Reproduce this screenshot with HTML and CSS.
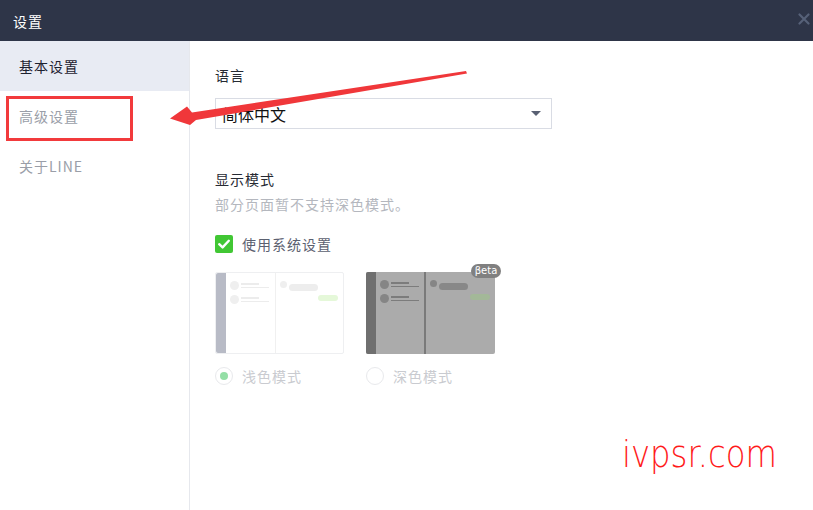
FILE: index.html
```html
<!DOCTYPE html>
<html lang="zh-CN">
<head>
<meta charset="utf-8">
<title>设置</title>
<link rel="stylesheet" href="styles.css">
</head>
<body>
<div class="window">
  <header class="titlebar">
    <span class="title">设置</span>
    <svg class="close" width="12" height="12" viewBox="0 0 12 12"><path d="M1.5 1.5L10.5 10.5M10.5 1.5L1.5 10.5" stroke="#566178" stroke-width="2.2" stroke-linecap="round"/></svg>
  </header>
  <div class="main">
    <nav class="sidebar">
      <div class="nav-item active">基本设置</div>
      <div class="nav-item">高级设置</div>
      <div class="nav-item">关于LINE</div>
    </nav>
    <section class="content">
      <div class="label">语言</div>
      <div class="select">
        <span class="select-text">简体中文</span>
        <span class="caret"></span>
      </div>
      <div class="label mode-title">显示模式</div>
      <div class="hint">部分页面暂不支持深色模式。</div>
      <div class="check-row">
        <span class="checkbox">
          <svg width="18" height="18" viewBox="0 0 18 18"><path d="M4.2 9.2L7.6 12.4L13.8 5.8" fill="none" stroke="#fff" stroke-width="2.4" stroke-linecap="round" stroke-linejoin="round"/></svg>
        </span>
        <span class="check-label">使用系统设置</span>
      </div>
      <div class="modes">
        <div class="mode">
          <div class="preview light">
            <div class="pv-bar"></div>
            <div class="pv-list">
              <div class="pv-row"><span class="pv-dot"></span><span class="pv-lines"><i class="s"></i><i></i></span></div>
              <div class="pv-row"><span class="pv-dot"></span><span class="pv-lines"><i class="s"></i><i></i></span></div>
            </div>
            <div class="pv-chat">
              <div class="pv-msg"><span class="pv-dot small"></span><span class="pv-bubble"></span></div>
              <div class="pv-mine"><span class="pv-green"></span></div>
            </div>
          </div>
          <div class="radio-row">
            <span class="radio on"></span>
            <span class="radio-label">浅色模式</span>
          </div>
        </div>
        <div class="mode">
          <div class="preview dark">
            <div class="pv-bar"></div>
            <div class="pv-list">
              <div class="pv-row"><span class="pv-dot"></span><span class="pv-lines"><i class="s"></i><i></i></span></div>
              <div class="pv-row"><span class="pv-dot"></span><span class="pv-lines"><i class="s"></i><i></i></span></div>
            </div>
            <div class="pv-chat">
              <div class="pv-msg"><span class="pv-dot small"></span><span class="pv-bubble"></span></div>
              <div class="pv-mine"><span class="pv-green"></span></div>
            </div>
            <span class="beta">βeta</span>
          </div>
          <div class="radio-row">
            <span class="radio"></span>
            <span class="radio-label">深色模式</span>
          </div>
        </div>
      </div>
    </section>
  </div>
</div>
<div class="highlight-box"></div>
<svg class="arrow" width="813" height="510" viewBox="0 0 813 510">
  <polygon points="466,71 467,73.5 196,120 190,125 170,118.5 187,106.5 192,112.5" fill="#f0373a"/>
</svg>
<div class="watermark">ivpsr.com</div>
</body>
</html>
```

FILE: styles.css
```css
* { box-sizing: border-box; }
html, body { margin: 0; padding: 0; }
body {
  width: 813px;
  height: 510px;
  overflow: hidden;
  background: #fff;
  font-family: "Microsoft YaHei", "Noto Sans CJK SC", "Noto Sans", sans-serif;
  letter-spacing: 1px;
  position: relative;
}
.window { display: flex; flex-direction: column; height: 510px; }
.titlebar {
  height: 41px;
  background: #2e3548;
  display: flex;
  align-items: center;
  justify-content: space-between;
  padding: 0 3px 0 13px;
  flex-shrink: 0;
}
.title { color: #fff; font-size: 14px; line-height: 20px; }
.close { margin-right: 0; margin-top: -4px; }
.main { flex: 1; display: flex; }
.sidebar {
  width: 190px;
  border-right: 1px solid #e6e8ed;
  flex-shrink: 0;
}
.nav-item {
  height: 50px;
  display: flex;
  align-items: center;
  padding-left: 19px;
  font-size: 14px;
  color: #9a9ea8;
}
.nav-item.active { background: #e8ebf3; color: #1e2230; }
.content { flex: 1; padding: 24px 0 0 25px; }
.label { font-size: 14px; color: #262a33; line-height: 20px; }
.select {
  margin-top: 13px;
  width: 337px;
  height: 31px;
  border: 1px solid #d9dce4;
  display: flex;
  align-items: center;
  justify-content: space-between;
  padding: 0 10px 0 6px;
}
.select-text { font-size: 16px; color: #111; line-height: 20px; letter-spacing: 0; }
.caret {
  width: 0; height: 0;
  border-left: 5px solid transparent;
  border-right: 5px solid transparent;
  border-top: 5px solid #596073;
}
.mode-title { margin-top: 40px; }
.hint { font-size: 14px; color: #b4b7be; margin-top: 5px; line-height: 20px; }
.check-row { display: flex; align-items: center; margin-top: 20px; }
.checkbox {
  width: 18px; height: 18px;
  background: #41c734;
  border-radius: 2px;
  display: flex;
}
.check-label { margin-left: 9px; font-size: 14px; color: #5b6070; line-height: 20px; }
.modes { display: flex; gap: 22px; margin-top: 18px; }
.mode { width: 129px; }
.preview {
  position: relative;
  height: 82px;
  border-radius: 2px;
  display: flex;
  overflow: visible;
}
.preview.light { background: #fff; border: 1px solid #eeeff1; }
.preview.dark { background: #ababab; }
.pv-bar { width: 10px; flex-shrink: 0; border-radius: 2px 0 0 2px; }
.light .pv-bar { background: #b8bbc6; }
.dark .pv-bar { background: #6f6f6f; }
.pv-list { width: 50px; padding: 8px 0 0 4px; display: flex; flex-direction: column; gap: 5px; }
.light .pv-list { border-right: 1px solid #f0f0f0; }
.dark .pv-list { border-right: 2px solid #7a7a7a; }
.pv-row { display: flex; align-items: center; gap: 2px; }
.pv-dot { width: 9px; height: 9px; border-radius: 50%; flex-shrink: 0; }
.pv-dot.small { width: 7px; height: 7px; }
.light .pv-dot { background: #efefef; }
.dark .pv-dot { background: #858585; }
.pv-lines { display: flex; flex-direction: column; gap: 2px; }
.pv-lines i { display: block; width: 28px; height: 1.5px; }
.pv-lines i.s { width: 18px; }
.light .pv-lines i { background: #ececec; }
.dark .pv-lines i { background: #7c7c7c; }
.pv-chat { flex: 1; padding: 8px 5px 0 4px; }
.pv-msg { display: flex; align-items: flex-start; gap: 2px; }
.pv-bubble { width: 29px; height: 7px; border-radius: 4px; margin-top: 3px; }
.light .pv-bubble { background: #ededed; }
.dark .pv-bubble { background: #888; }
.pv-mine { display: flex; justify-content: flex-end; margin-top: 4px; }
.pv-green { width: 20px; height: 6px; border-radius: 3px; }
.light .pv-green { background: #e5f8d9; }
.dark .pv-green { background: #a3b898; }
.beta {
  position: absolute;
  top: -8px;
  right: -6px;
  width: 30px;
  height: 14px;
  border-radius: 7px;
  background: #808080;
  color: #fff;
  font-family: "DejaVu Sans", sans-serif;
  font-size: 10px;
  letter-spacing: 0;
  line-height: 14px;
  text-align: center;
}
.radio-row { display: flex; align-items: center; margin-top: 12px; }
.radio {
  width: 18px; height: 18px;
  border-radius: 50%;
  border: 1px solid #e8e9ec;
  display: flex;
  align-items: center;
  justify-content: center;
}
.radio.on::after {
  content: "";
  width: 8px; height: 8px;
  border-radius: 50%;
  background: #94dfa6;
}
.radio-label { margin-left: 9px; font-size: 14px; color: #c9cbd0; line-height: 20px; }
.highlight-box {
  position: absolute;
  left: 6px; top: 96px;
  width: 127px; height: 45px;
  border: 3px solid #f23a3c;
}
.arrow { position: absolute; left: 0; top: 0; pointer-events: none; }
.watermark {
  position: absolute;
  left: 622px; top: 429px;
  color: #ff1a1a;
  font-family: "DejaVu Sans", sans-serif;
  font-weight: 200;
  font-size: 38px;
  letter-spacing: 0;
  transform: scaleX(0.85);
  transform-origin: left top;
  line-height: 50px;
}
```
